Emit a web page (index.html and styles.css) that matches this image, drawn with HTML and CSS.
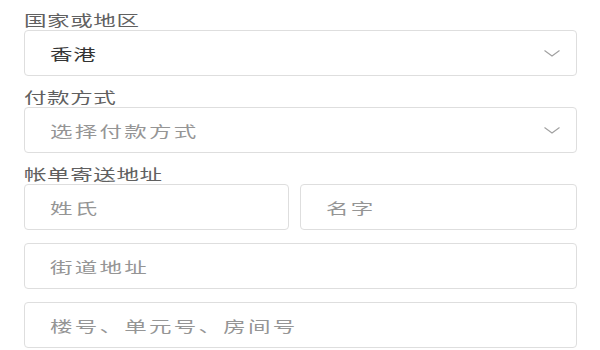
FILE: index.html
```html
<!DOCTYPE html>
<html lang="zh-CN">
<head>
    <meta charset="UTF-8">
    <meta name="viewport" content="width=device-width, initial-scale=1.0">
    <title>结账</title>
    <link rel="stylesheet" href="styles.css">
</head>
<body>
    <form class="checkout">
        <!-- 国家 -->
        <div class="group">
            <div class="label"><span class="txt">国家或地区</span></div>
            <div class="field select">
                <span class="txt value">香港</span>
                <svg class="arrow" width="16" height="7" viewBox="0 0 16 7">
                    <polyline points="0.5,0.5 8,6 15.5,0.5" fill="none" stroke="#a0a0a0" stroke-width="1.1"/>
                </svg>
            </div>
        </div>

        <!-- 付款 -->
        <div class="group">
            <div class="label"><span class="txt">付款方式</span></div>
            <div class="field select">
                <span class="txt">选择付款方式</span>
                <svg class="arrow" width="16" height="7" viewBox="0 0 16 7">
                    <polyline points="0.5,0.5 8,6 15.5,0.5" fill="none" stroke="#a0a0a0" stroke-width="1.1"/>
                </svg>
            </div>
        </div>

        <!-- 地址 -->
        <div class="group">
            <div class="label"><span class="txt">帐单寄送地址</span></div>
            <div class="rows">
                <div class="row-2">
                    <div class="field"><span class="txt">姓氏</span></div>
                    <div class="field"><span class="txt">名字</span></div>
                </div>
                <div class="field"><span class="txt">街道地址</span></div>
                <div class="field"><span class="txt">楼号、单元号、房间号</span></div>
            </div>
        </div>
    </form>
</body>
</html>
```

FILE: styles.css
```css
* {
    margin: 0;
    padding: 0;
    box-sizing: border-box;
}

body {
    background: #fff;
    font-family: "Noto Sans CJK SC", "Noto Sans", sans-serif;
    font-size: 15px;
    color: #999;
}

.checkout {
    width: 553px;
    margin-left: 24px;
    padding-top: 10px;
}

.group {
    margin-bottom: 11px;
}

/* glyphs in the screenshot are drawn wide */
.txt {
    display: inline-block;
    white-space: nowrap;
    transform: scaleX(1.5);
    transform-origin: left center;
    letter-spacing: 0.4px;
}

.label {
    height: 20px;
    line-height: 20px;
    color: #606060;
}

.field {
    height: 46px;
    border: 1px solid #dedede;
    border-radius: 4px;
    background: #fff;
    display: flex;
    align-items: center;
    padding: 0 16px 0 25px;
    color: #959595;
}

.field .txt {
    letter-spacing: 1.5px;
}

.select {
    justify-content: space-between;
}

.field .value {
    color: #333;
    letter-spacing: 0.5px;
}

.arrow {
    display: block;
    margin-top: 1px;
}

.rows {
    display: flex;
    flex-direction: column;
    gap: 13px;
}

.row-2 {
    display: grid;
    grid-template-columns: 265px 1fr;
    gap: 11px;
}
```
